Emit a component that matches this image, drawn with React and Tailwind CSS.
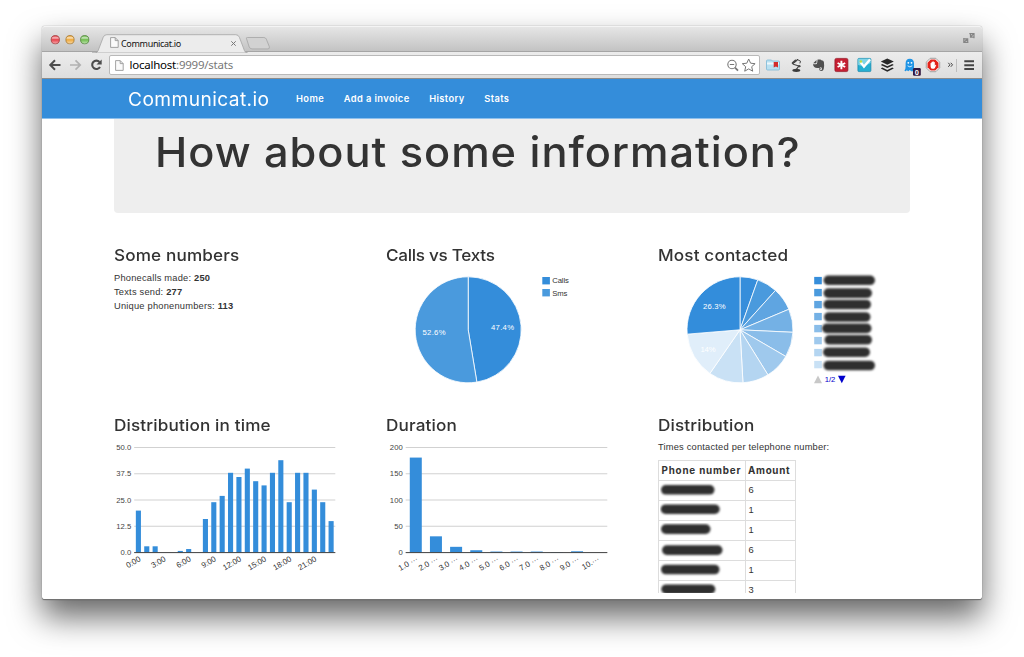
import React from "react";

const BLUE = "#348dda";
const HOURS = [20, 3, 3, 0, 0, 0.8, 1.7, 0, 16, 24, 27, 38, 36, 40, 34, 32, 38, 44, 24, 38, 38, 30, 24, 15];
const DURATION = [181, 31, 11, 4.5, 2, 2, 2, 0.8, 2.5, 0];
const SHADES = ["#368edb", "#4a9add", "#5fa5e1", "#74b1e5", "#8abde9", "#9fc9ed", "#b4d5f1", "#c9e1f5", "#e0eefa", "#338ddb"];
const ANGLES = [0, 19.6, 42, 67.2, 92.7, 120.2, 148.2, 176.8, 214.6, 265.3, 360];

function Heading({ children, className = "tracking-[0.13px]" }) {
  return <h3 className={"h-6 w-fit origin-left scale-x-[1.06] whitespace-nowrap font-['Inter'] text-[16.2px] leading-6 font-medium " + className}>{children}</h3>;
}

function slice(cx, cy, r, a, b) {
  const p = (d) => [cx + r * Math.sin((d * Math.PI) / 180), cy - r * Math.cos((d * Math.PI) / 180)].map((n) => n.toFixed(2)).join(" ");
  return `M${cx} ${cy}L${p(a)}A${r} ${r} 0 ${b - a > 180 ? 1 : 0} 1 ${p(b)}Z`;
}

function CallsPie() {
  return (
    <svg width="240" height="120" viewBox="386 270 240 120" className="block font-['Liberation_Sans']" fontSize="7.7">
      <g stroke="#fff" strokeWidth="0.8">
        <path d={slice(468.2, 329.8, 53, 0, 170.6)} fill={BLUE} />
        <path d={slice(468.2, 329.8, 53, 170.6, 360)} fill="#4a9add" />
      </g>
      <text x="491" y="330.3" fill="#fff" textLength="23">47.4%</text>
      <text x="422.5" y="335.3" fill="#fff" textLength="23">52.6%</text>
      <rect x="542.3" y="277" width="7.6" height="7.4" fill={BLUE} />
      <rect x="542.3" y="289" width="7.6" height="7.4" fill="#4a9add" />
      <g fill="#333">
        <text x="552.3" y="283.4" textLength="16.5">Calls</text>
        <text x="552.3" y="295.6" textLength="15">Sms</text>
      </g>
    </svg>
  );
}

const LEGEND_MARKS = [
  [823.5, 51.5, 280.3], [823.5, 48.5, 293.1], [823.5, 47.5, 304.5], [824, 46.5, 317],
  [822, 49.5, 328.4], [824.5, 47.5, 339.8], [823, 47, 352.2], [823.5, 51.5, 365.5],
];

function ContactPie() {
  return (
    <svg width="240" height="120" viewBox="658 270 240 120" className="block font-['Liberation_Sans']" fontSize="7.7">
      <g stroke="#fff" strokeWidth="0.8">
        {SHADES.map((c, i) => <path key={c} d={slice(740, 329.8, 53, ANGLES[i], ANGLES[i + 1])} fill={c} />)}
      </g>
      <text x="703" y="309.2" fill="#fff" textLength="22.5">26.3%</text>
      <text x="700.5" y="351.5" fill="#fff" textLength="15">14%</text>
      {LEGEND_MARKS.map(([x, w, y], i) => (
        <g key={y}>
          <rect x="814.2" y={276.9 + i * 12} width="7.6" height="7.4" fill={SHADES[i]} />
          <rect x={x} y={y - 4.8} width={w} height="9.6" rx="4.8" fill="#2f2f2f" className="blur-[0.8px]" />
        </g>
      ))}
      <path d="M814 383.2h8l-4-7.6z" fill="#c8c8c8" />
      <path d="M838 375.8h7.6l-3.8 7.4z" fill="#0000cc" />
      <text x="824.8" y="382.2" fill="#0000cc" textLength="10.5">1/2</text>
    </svg>
  );
}

function BarChart({ data, x0, x1, barW, max, ticks, labels, labelStep, left }) {
  const pitch = (x1 - x0) / data.length;
  return (
    <svg width="240" height="140" viewBox={`${left} 440 240 140`} className="block font-['Liberation_Sans']" fontSize="7.7">
      {ticks.map((t, i) => (
        <g key={t}>
          <path d={`M${x0} ${447.5 + i * 26.25}H${x1}`} stroke="#ccc" strokeWidth="0.9" />
          <text x={x0 - 3} y={450.2 + i * 26.25} textAnchor="end" fill="#444">{t}</text>
        </g>
      ))}
      {data.map((v, i) => (
        <rect key={i} x={x0 + (i + 0.5) * pitch - barW / 2} y={552.6 - (v / max) * 105} width={barW} height={(v / max) * 105} fill={BLUE} />
      ))}
      <path d={`M${x0} 552.6H${x1}`} stroke="#444" strokeWidth="1" />
      {labels.map((t, i) => {
        const x = x0 + (i * labelStep + 0.5) * pitch + 2.8;
        return <text key={t} x={x} y="560.5" textAnchor="end" fill="#333" fontSize="7.9" transform={`rotate(-30 ${x} 560.5)`}>{t}</text>;
      })}
    </svg>
  );
}

function PageIcon({ className }) {
  return (
    <svg width="9" height="11" viewBox="0 0 9 11" className={className}>
      <path d="M.6.6h4.6l3 3v6.8H.6zM5.2.6v3h3" fill="#fafafa" stroke="#999" strokeWidth=".9" />
    </svg>
  );
}

function TabStrip() {
  return (
    <div className="flex h-[26px] items-start rounded-t-[3px] border-t border-[#f4f4f4] border-b border-b-[#a5a5a5] bg-linear-to-b from-[#e6e6e6] to-[#c3c3c3]">
      <svg width="50" height="25" viewBox="42 27 50 25" className="shrink-0">
        <defs>
          <linearGradient id="shine" x1="0" y1="0" x2="0" y2="1">
            <stop offset="0" stopColor="#fff" stopOpacity=".05" />
            <stop offset=".25" stopColor="#fff" stopOpacity=".65" />
            <stop offset=".5" stopColor="#fff" stopOpacity="0" />
            <stop offset="1" stopColor="#fff" stopOpacity=".5" />
          </linearGradient>
        </defs>
        {[[55.3, "#e8414a", "#9b3a3a"], [70, "#efa93a", "#a0722c"], [84.7, "#6fbd4e", "#4c7f38"]].map(([x, f, s]) => (
          <g key={x}>
            <circle cx={x} cy="39.7" r="4.1" fill={f} stroke={s} strokeWidth=".8" />
            <circle cx={x} cy="39.7" r="3.7" fill="url(#shine)" />
          </g>
        ))}
      </svg>
      <div className="relative mt-[7px] h-[19px] w-[160px]">
        <svg width="186" height="19" viewBox="92 34 186 19" className="absolute left-0 top-0">
          <path d="M246.5 38.700q-.6-1.200 1-1.200h16.300q1.800 0 2.500 1.600l3 7.500q.6 2.300-1.300 2.300h-16q-2 0-2.800-2z" fill="#d2d2d2" stroke="#a5a5a5" strokeWidth=".8" />
          <path d="M92 53h3q2.300 0 3.200-2.500l5-13.200q.9-2.600 3.600-2.600h129q2.600 0 3.600 2.600l5 13.200q.9 2.500 3.200 2.500z" fill="#ececec" stroke="#a5a5a5" strokeWidth=".8" />
        </svg>
        <div className="relative flex h-[18px] items-center pl-[18px]">
          <PageIcon className="-mt-px" />
          <span className="ml-[2px] font-['Noto_Sans'] text-[9px] leading-[19px] tracking-[-0.33px] text-[#111]">Communicat.io</span>
          <svg width="5" height="5" viewBox="0 0 5 5" className="ml-auto mr-[16px]"><path d="M.3.3l4.400 4.400m0-4.400L.3 4.700" stroke="#777" strokeWidth="1" /></svg>
        </div>
      </div>
      <svg width="12" height="12" viewBox="0 0 12 12" className="ml-auto mr-[7px] mt-[5px]" fill="none" stroke="#858585" strokeWidth="1.200">
        <path d="M6.300 1.600H11V6.200M7.500 1.600V5.200H11M7.200 5.200L10.600 1.900M.8 6V10.400H5.400M.8 6.800H4.700V10.400M1.100 10L4.500 6.900" />
      </svg>
    </div>
  );
}

function ExtensionIcons() {
  return (
    <svg width="222" height="26" viewBox="760 52 222 26" className="shrink-0">
      <path d="M766.500 61q0-1 1-1h4l1 1h6q1 0 1 1v7q0 1-1 1h-11q-1 0-1-1z" fill="#b9e0f1" stroke="#7ebad8" strokeWidth=".8" />
      <path d="M767 62.500h12v2h-12z" fill="#edf8fd" />
      <path d="M773.700 62h4.300v5.500l-2.100-1-2.200 1z" fill="#d22c2c" />
      <g fill="none" stroke="#444" strokeLinecap="round">
        <path d="M797.500 59.700l-4 3M793.300 64.200l5.500 1.800-2.600 3.600" strokeWidth="1.100" />
        <path d="M792.800 63l2.800-2.400" strokeWidth="2.200" />
        <path d="M797.300 59.500l3.200 1.700-.5 1.800" strokeWidth="1" />
        <circle cx="799.200" cy="66.200" r=".8" fill="#444" />
      </g>
      <ellipse cx="796.300" cy="70.300" rx="4" ry="1.600" fill="#3b3b3b" />
      <path d="M816.500 60l-3.300 3.200h2.600q.7 0 .7-.7zM817.600 59.400h2.500q1 0 1.300.8 2.300.1 2.500 1.700.6 3.700-.2 7.200-.3 2-2.300 2-2.300-.1-2.200-2.100 0-1.600 1.600-1.600v1.200q-.8.1-.7.8.2.700 1.200.6.900-.2.600-1.600-.3-1.700-1.600-1.500-.5 1.600-3.200 1.100-3.600-.2-4.200-3.800h2.800q1.500 0 1.500-1.500z" fill="#505050" />
      <rect x="834.900" y="58.400" width="13" height="13.200" rx="1.500" fill="#c51f32" stroke="#911624" strokeWidth=".7" />
      <path d="M841.400 60.800v8.400M837.600 63l7.600 4M837.600 67l7.600-4" stroke="#fff" strokeWidth="1.900" />
      <rect x="857.900" y="58.400" width="13" height="13.200" rx="1" fill="#25afd1" stroke="#1785aa" strokeWidth=".7" />
      <path d="M858.200 58.700h12.400v4.400q-6 4-12.400 2z" fill="#7fd4e7" />
      <path d="M860.500 62l3.500 4.600 6-7" stroke="#fff" strokeWidth="2.300" fill="none" />
      <circle cx="860.900" cy="61.500" r="1.300" fill="#c3dc42" />
      <g fill="#282828">
        <path d="M887.300 58.500l6.500 3-6.500 3.200-6.500-3.200z" />
        <path d="M882.300 64l5 2.300 5-2.300 1.500.9-6.500 3.200-6.500-3.200zM882.300 67.600l5 2.300 5-2.300 1.500.9-6.500 3.200-6.500-3.200z" />
      </g>
      <path d="M905.600 71.300q-1.500.1-.9-1.200.9-1.300.9-3.600v-3q0-4.700 4.200-4.700t4.200 4.700v5q0 2.300 1.200 2.800h-4l-1.400-1.200-1.500 1.200-1.500-1z" fill="#1f94e5" />
      <circle cx="908.300" cy="62.800" r=".9" fill="#fff" /><circle cx="911.500" cy="62.800" r=".9" fill="#fff" />
      <path d="M907.600 65.800q2.300 2.200 4.600 0" stroke="#fff" strokeWidth=".8" fill="none" />
      <rect x="913" y="68" width="7.800" height="7.800" rx="1.200" fill="#33183f" />
      <text x="914.800" y="74.700" fontSize="7.500" fontWeight="700" fill="#fff" className="font-['Liberation_Sans']">0</text>
      <path d="M930.200 58.300h5.600l3.900 3.900v5.600l-3.900 3.900h-5.600l-3.900-3.900v-5.600z" fill="#fff" stroke="#888" strokeWidth=".8" />
      <path d="M930.700 59.500h4.600l3.200 3.200v4.600l-3.200 3.200h-4.600l-3.200-3.200v-4.600z" fill="#e2231a" />
      <path d="M930.600 66.500l-.1-3.200q.6-.7 1 0v-1.200q.6-.8 1.100 0v-.5q.6-.8 1.100 0v.7q.7-.6 1.100 0v3.400l.8-1q.7-.1.600.6l-1.300 2.800q-.4.600-1.200.6h-1.200q-1.900 0-1.900-2.200z" fill="#fff" />
      <path d="M948.300 62.800l1.700 2-1.700 2M950.800 62.800l1.700 2-1.700 2" fill="none" stroke="#444" strokeWidth="1" />
      <path d="M956.500 59v13" stroke="#b5b5b5" strokeWidth=".8" />
      <path d="M964.300 61.300h9.700M964.300 65.200h9.700M964.300 69.100h9.700" stroke="#444" strokeWidth="2" />
    </svg>
  );
}

function Toolbar() {
  return (
    <div className="flex h-[27px] items-start border-b border-[#8c8c8c] bg-linear-to-b from-[#ececec] to-[#dedede]">
      <svg width="67" height="26" viewBox="42 52 67 26" className="shrink-0" fill="none">
        <path d="M60.500 65H50.500M55 60.300l-4.700 4.700 4.700 4.700" stroke="#4c4c4c" strokeWidth="2" />
        <path d="M70 65H80M75.500 60.300l4.700 4.700-4.700 4.700" stroke="#b1b1b1" strokeWidth="1.700" />
        <path d="M100 67a4.200 4.200 0 1 1-.5-5" stroke="#4c4c4c" strokeWidth="2.100" />
        <path d="M101.700 59.400v5.200h-5.200z" fill="#4c4c4c" />
      </svg>
      <div className="mt-[3px] flex h-5 w-[651px] shrink-0 items-center rounded-[2px] border border-[#b9b9b9] bg-white pl-[5px]">
        <PageIcon className="" />
        <span className="ml-[5.500px] font-['Noto_Sans'] text-[11.500px] leading-[18px] tracking-[-0.230px] text-[#777]"><span className="text-black">localhost</span>:9999/stats</span>
        <svg width="30" height="18" viewBox="726 56 30 18" className="ml-auto mr-[3px]" fill="none" stroke="#777">
          <circle cx="732" cy="64.500" r="4.200" strokeWidth="1.100" />
          <path d="M729.800 64.500h4.400" strokeWidth="1" />
          <path d="M735 67.600l3 3" strokeWidth="1.700" />
          <path d="M748.700 59l1.900 4.200 4.500.5-3.400 3 1 4.500-4-2.300-4 2.300 1-4.500-3.400-3 4.500-.5z" strokeWidth="1" />
        </svg>
      </div>
      <ExtensionIcons />
    </div>
  );
}

function Scribble({ w, x = 0, y = 0 }) {
  return (
    <svg width="80" height="14" viewBox="0 0 80 14" className="block">
      <rect x={1 + x} y={1.7 + y} width={w} height="9.6" rx="4.8" fill="#2f2f2f" className="blur-[0.8px]" />
    </svg>
  );
}

const ROWS = [[53.5, 0, 0.3, 6], [59, -0.3, -0.3, 1], [49.5, 0, -0.4, 1], [60.5, 1, 0.6, 6], [58.5, 0, 0, 1], [54, 0.3, -0.3, 3]];

export default function App() {
  return (
    <div className="h-[657px] w-[1024px] overflow-hidden bg-white px-[42px] pt-[26px] text-[#333]">
      <div className="h-[574px] w-[940px] overflow-hidden rounded-[3px] border-b border-[#727272] bg-white shadow-[0_0_1px_rgba(0,0,0,0.6),0_17px_32px_rgba(0,0,0,0.6)]">
        <TabStrip />
        <Toolbar />
        <div className="h-[514px] overflow-hidden">
          <nav className="flex h-10 items-center border-b border-[#8dc0ed] bg-[#348dda] pl-[85.500px] font-['Inter'] font-medium text-white">
            <span className="w-[168.500px] text-[18.500px] leading-10 font-normal"><span className="inline-block origin-left scale-x-[1.035] tracking-[0.4px]">Communicat.io</span></span>
            <div className="flex gap-[19.500px] text-[9.300px] font-semibold tracking-[0.420px]">
              <span>Home</span>
              <span>Add a invoice</span>
              <span>History</span>
              <span>Stats</span>
            </div>
          </nav>
          <main className="pl-[72px]">
            <div className="h-[94px] w-[796px] rounded-b-[4px] bg-[#eee] pl-[41px] pt-[7px]">
              <h1 className="w-fit origin-left scale-x-[1.045] whitespace-nowrap font-['Inter'] text-[41.500px] leading-[53px] font-medium tracking-[0.9px]">How about some information?</h1>
            </div>
            <div className="mt-[30px] grid grid-cols-[272px_272px_272px] grid-rows-[170px_180px]">
              <section>
                <Heading>Some numbers</Heading>
                <div className="mt-[3.500px] font-['Liberation_Sans'] text-[9.300px] leading-[14px] tracking-[0.210px]">
                  <p>Phonecalls made: <b>250</b></p>
                  <p>Texts send: <b>277</b></p>
                  <p>Unique phonenumbers: <b>113</b></p>
                </div>
              </section>
              <section>
                <Heading className="tracking-[-0.280px]">Calls vs Texts</Heading>
                <div className="mt-[3px]"><CallsPie /></div>
              </section>
              <section>
                <Heading>Most contacted</Heading>
                <div className="mt-[3px]"><ContactPie /></div>
              </section>
              <section>
                <Heading>Distribution in time</Heading>
                <div className="mt-[3px]">
                  <BarChart left={114} data={HOURS} x0={134.200} x1={335.300} barW={5.100} max={50} ticks={["50.0", "37.5", "25.0", "12.5", "0.0"]} labels={["0:00", "3:00", "6:00", "9:00", "12:00", "15:00", "18:00", "21:00"]} labelStep={3} />
                </div>
              </section>
              <section>
                <Heading>Duration</Heading>
                <div className="mt-[3px]">
                  <BarChart left={386} data={DURATION} x0={405.700} x1={607.300} barW={12} max={200} ticks={["200", "150", "100", "50", "0"]} labels={["1.0 ···", "2.0 ···", "3.0 ···", "4.0 ···", "5.0 ···", "6.0 ···", "7.0 ···", "8.0 ···", "9.0 ···", "10.···"]} labelStep={1} />
                </div>
              </section>
              <section>
                <Heading>Distribution</Heading>
                <p className="mt-[3px] font-['Liberation_Sans'] text-[9.300px] leading-[14px] tracking-[0.200px]">Times contacted per telephone number:</p>
                <table className="mt-[6px] w-[138px] table-fixed border-collapse font-['Liberation_Sans'] text-[9.300px] leading-[12px]">
                  <thead>
                    <tr className="h-5 text-left font-['Inter'] text-[9.800px]">
                      <th className="w-[87px] whitespace-nowrap border border-[#ddd] p-0 pl-[2.500px] font-bold tracking-[0.820px]">Phone number</th>
                      <th className="border border-[#ddd] p-0 pl-[2px] font-bold tracking-[0.700px]">Amount</th>
                    </tr>
                  </thead>
                  <tbody>
                    {ROWS.map(([w, x, y, n], i) => (
                      <tr key={i} className="h-5">
                        <td className="border border-[#ddd] p-0 pb-px pl-px"><Scribble w={w} x={x} y={y} /></td>
                        <td className="border border-[#ddd] p-0 pb-[2px] pl-[2.500px]">{n}</td>
                      </tr>
                    ))}
                  </tbody>
                </table>
              </section>
            </div>
          </main>
        </div>
      </div>
    </div>
  );
}
